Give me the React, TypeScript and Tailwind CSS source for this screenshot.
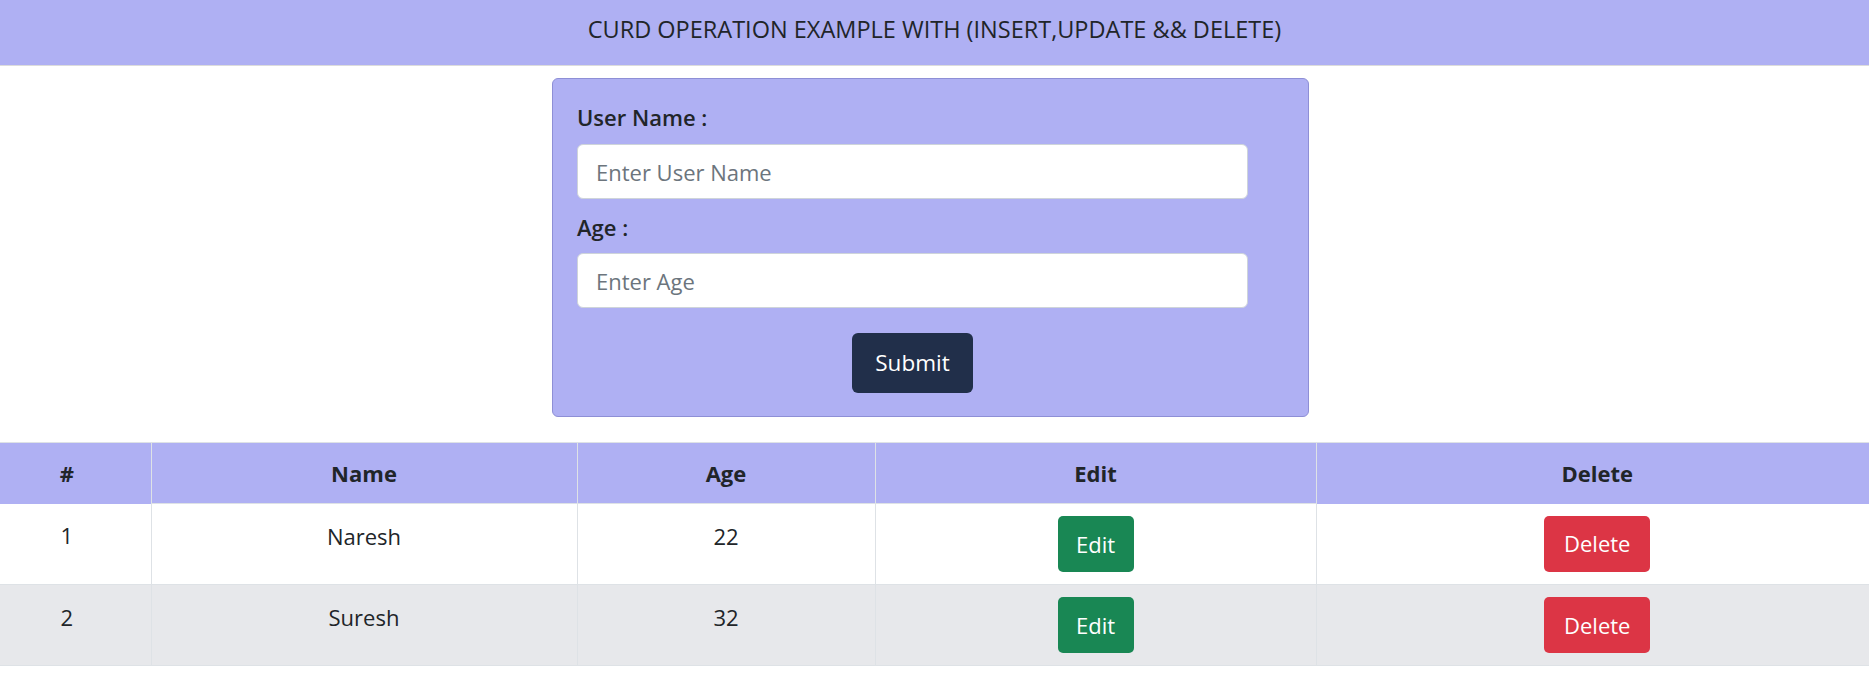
import React from "react";

const rows = [
  { id: 1, name: "Naresh", age: 22 },
  { id: 2, name: "Suresh", age: 32 },
];

export default function App() {
  return (
    <div className="min-h-[676px] bg-white text-[#212529] font-['Open_Sans',sans-serif]">
      <div className="flex h-[66px] items-center justify-center border-b border-[#dcdcdc] bg-[#afb0f3] pb-[6px] text-[23.5px]">
        CURD OPERATION EXAMPLE WITH (INSERT,UPDATE &amp;&amp; DELETE)
      </div>

      <div className="ml-[552px] mt-[12px] flex h-[339px] w-[757px] flex-col rounded-[6px] border border-[#8e8fd6] bg-[#afb0f3] px-[24px] pt-[22px]">
        <label className="text-[22px] font-semibold leading-[33px]">User Name :</label>
        <input
          placeholder="Enter User Name"
          className="mt-[10px] h-[55px] w-[671px] rounded-[6px] border border-[#ced4da] bg-white px-[18px] text-[22px] placeholder:text-[#6c757d] outline-none"
        />
        <label className="mt-[12px] text-[22px] font-semibold leading-[33px]">Age :</label>
        <input
          placeholder="Enter Age"
          className="mt-[9px] h-[55px] w-[671px] rounded-[6px] border border-[#ced4da] bg-white px-[18px] text-[22px] placeholder:text-[#6c757d] outline-none"
        />
        <div className="mt-[25px] flex w-[671px] justify-center">
          <button className="h-[60px] w-[121px] rounded-[6px] bg-[#212f4a] text-[22.5px] text-white">
            Submit
          </button>
        </div>
      </div>

      <table className="mt-[25px] w-full border-collapse text-center text-[22px]">
        <thead>
          <tr className="h-[61px] bg-[#afb0f3]">
            <th className="w-[151px] border-r border-t border-[#dee2e6] pr-[17px] font-bold">#</th>
            <th className="w-[426px] border border-[#dee2e6] font-bold">Name</th>
            <th className="w-[298px] border border-[#dee2e6] font-bold">Age</th>
            <th className="w-[441px] border border-[#dee2e6] font-bold">Edit</th>
            <th className="border-l border-t border-[#dee2e6] pl-[9px] font-bold">Delete</th>
          </tr>
        </thead>
        <tbody>
          {rows.map((r, i) => (
            <tr key={r.id} className={i % 2 === 1 ? "bg-[#e7e8eb]" : "bg-white"}>
              <td className="h-[81px] border-b border-r border-[#dee2e6] pb-[16px] pr-[17px] align-middle">{r.id}</td>
              <td className="border border-[#dee2e6] pb-[16px] align-middle">{r.name}</td>
              <td className="border border-[#dee2e6] pb-[16px] align-middle">{r.age}</td>
              <td className="border border-[#dee2e6] align-middle">
                <button className="h-[56px] w-[76px] rounded-[5px] bg-[#198754] text-white">Edit</button>
              </td>
              <td className="border-b border-l border-[#dee2e6] pl-[9px] align-middle">
                <button className="h-[56px] w-[106px] rounded-[5px] bg-[#dc3545] text-white">Delete</button>
              </td>
            </tr>
          ))}
        </tbody>
      </table>
    </div>
  );
}
